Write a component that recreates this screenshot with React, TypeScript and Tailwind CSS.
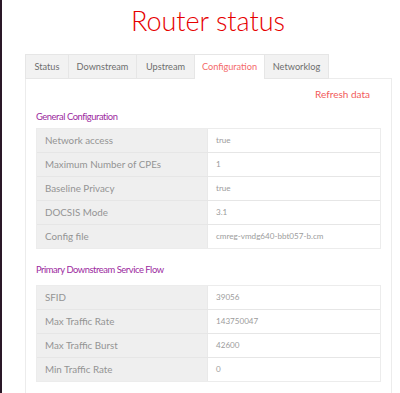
import React from "react";

const general: [string, string][] = [
  ["Network access", "true"],
  ["Maximum Number of CPEs", "1"],
  ["Baseline Privacy", "true"],
  ["DOCSIS Mode", "3.1"],
  ["Config file", "cmreg-vmdg640-bbt057-b.cm"],
];

const downstream: [string, string][] = [
  ["SFID", "39056"],
  ["Max Traffic Rate", "143750047"],
  ["Max Traffic Burst", "42600"],
  ["Min Traffic Rate", "0"],
];

const tabs: { name: string; w: string }[] = [
  { name: "Status", w: "w-[44px] border-l" },
  { name: "Downstream", w: "w-[68px]" },
  { name: "Upstream", w: "w-[58px]" },
  { name: "Configuration", w: "w-[70px]" },
  { name: "Networklog", w: "w-[64px]" },
];

function Table({ rows }: { rows: [string, string][] }) {
  return (
    <div className="border border-[#ececec]">
      {rows.map(([k, v], i) => (
        <div
          key={k}
          className={`flex ${i > 0 ? "h-[24px] border-t border-[#e6e6e6]" : "h-[23px]"}`}
        >
          <div className="w-[170px] bg-[#efefef] pl-[8px] flex items-center text-[9.8px] text-[#949494]">
            {k}
          </div>
          <div className="flex-1 bg-white pl-[8px] flex items-center text-[8.1px] text-[#9c9c9c] border-l border-[#e9e9e9]">
            {v}
          </div>
        </div>
      ))}
    </div>
  );
}

export default function App() {
  return (
    <div
      className="w-[400px] h-[393px] overflow-hidden bg-white border-l-2 border-[#2a1828]"
      style={{ fontFamily: "Lato, 'Liberation Sans', sans-serif" }}
    >
      <div className="h-[54px] flex items-center justify-center pl-[14px] pb-[16px] pt-[2px]">
        <h1 className="text-[27px] leading-none text-[#e60000] font-light">Router status</h1>
      </div>
      <div className="pl-[23px] pr-[8px]">
        <div className="flex h-[25px]">
          {tabs.map((t) => {
            const active = t.name === "Configuration";
            return (
              <div
                key={t.name}
                className={`flex items-center justify-center text-[9.2px] border-t border-r border-[#e6e6e6] ${t.w} ${
                  active ? "bg-white text-[#f46a6a] border-b-0" : "bg-[#f2f2f2] text-[#6e6e6e] border-b"
                }`}
              >
                {t.name}
              </div>
            );
          })}
          <div className="flex-1 border-b border-[#ececec]" />
        </div>
        <div className="border-l border-r border-[#ececec] px-[10px] h-[400px]">
          <div className="flex justify-end pr-[11px] h-[28px] items-center pt-[2px]">
            <span className="text-[10px] text-[#f25a5a]">Refresh data</span>
          </div>
          <div className="h-[21px] flex items-center text-[9.4px] tracking-[-0.45px] text-[#9c2aa0]">
            General Configuration
          </div>
          <Table rows={general} />
          <div className="h-[36px] flex items-center pt-[6px] text-[9.4px] tracking-[-0.45px] text-[#9c2aa0]">
            Primary Downstream Service Flow
          </div>
          <Table rows={downstream} />
        </div>
      </div>
    </div>
  );
}
